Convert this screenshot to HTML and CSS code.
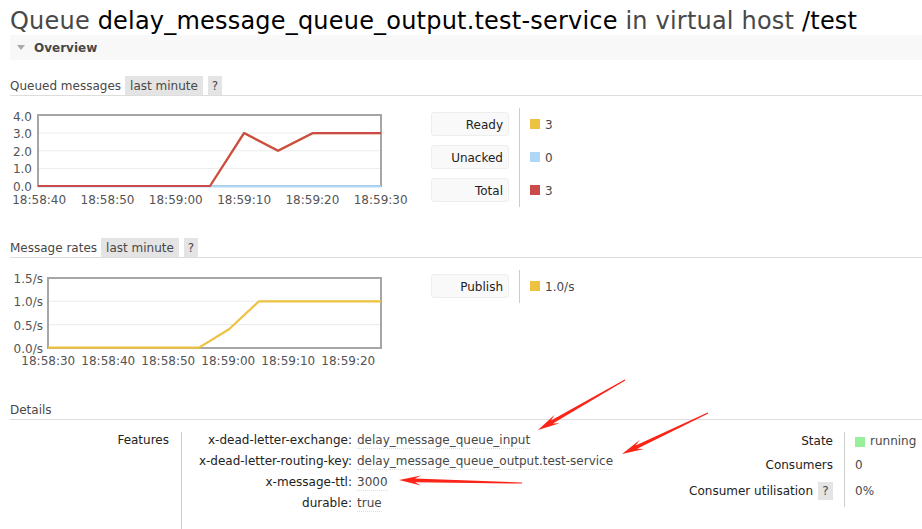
FILE: index.html
```html
<!DOCTYPE html>
<html>
<head>
<meta charset="utf-8">
<title>Queue delay_message_queue_output.test-service</title>
<link rel="stylesheet" href="styles.css">
</head>
<body>
<div class="page">
  <h1 class="title"><span>Queue</span> <span class="name">delay_message_queue_output.test-service</span> <span>in virtual host</span> <span class="name">/test</span></h1>
  <div class="section-bar"><span class="tri"></span>Overview</div>

  <div class="sub-head"><span>Queued messages</span><span class="badge">last minute</span><span class="badge q">?</span></div>
  <div class="chart-row">
    <svg class="chart" width="411" height="106" viewBox="10 104 411 106">
      <g class="grid">
        <line x1="39" y1="133.1" x2="380" y2="133.1"/>
        <line x1="39" y1="150.75" x2="380" y2="150.75"/>
        <line x1="39" y1="168.4" x2="380" y2="168.4"/>
      </g>
      <rect class="frame" x="38" y="115" width="343" height="71"/>
      <polyline class="s-yellow" points="38,186 210,186 244,133.1 278,150.75 313,133.1 381,133.1"/>
      <polyline class="s-blue" points="38,186.3 381,186.3"/>
      <polyline class="s-red" points="38,186 210,186 244,133.1 278,150.75 313,133.1 381,133.1"/>
      <g class="ylab">
        <text x="32" y="120.8">4.0</text>
        <text x="32" y="138.1">3.0</text>
        <text x="32" y="155.7">2.0</text>
        <text x="32" y="173.3">1.0</text>
        <text x="32" y="190.9">0.0</text>
      </g>
      <g class="xlab">
        <text x="39.2" y="204.3">18:58:40</text>
        <text x="107.5" y="204.3">18:58:50</text>
        <text x="175.8" y="204.3">18:59:00</text>
        <text x="244.1" y="204.3">18:59:10</text>
        <text x="312.4" y="204.3">18:59:20</text>
        <text x="380.7" y="204.3">18:59:30</text>
      </g>
    </svg>
    <div class="legend legend-1">
      <div class="lg-label"><span class="lg-box">Ready</span></div>
      <div class="lg-value"><span class="sq sq-yellow"></span>3</div>
      <div class="lg-label"><span class="lg-box">Unacked</span></div>
      <div class="lg-value"><span class="sq sq-blue"></span>0</div>
      <div class="lg-label"><span class="lg-box">Total</span></div>
      <div class="lg-value"><span class="sq sq-red"></span>3</div>
    </div>
  </div>

  <div class="sub-head sub-rates"><span>Message rates</span><span class="badge">last minute</span><span class="badge q">?</span></div>
  <div class="chart-row">
    <svg class="chart" width="411" height="112" viewBox="10 258 411 112">
      <g class="grid">
        <line x1="49" y1="301.3" x2="380" y2="301.3"/>
        <line x1="49" y1="324.7" x2="380" y2="324.7"/>
      </g>
      <rect class="frame" x="48" y="278" width="333" height="70"/>
      <polyline class="s-yellow" points="48,347.6 199,347.6 229,329.3 259,301.3 381,301.3"/>
      <g class="ylab">
        <text x="43" y="282.8">1.5/s</text>
        <text x="43" y="306.1">1.0/s</text>
        <text x="43" y="329.5">0.5/s</text>
        <text x="43" y="352.8">0.0/s</text>
      </g>
      <g class="xlab">
        <text x="48.3" y="364.8">18:58:30</text>
        <text x="108.3" y="364.8">18:58:40</text>
        <text x="168.3" y="364.8">18:58:50</text>
        <text x="228.3" y="364.8">18:59:00</text>
        <text x="288.3" y="364.8">18:59:10</text>
        <text x="348.3" y="364.8">18:59:20</text>
      </g>
    </svg>
    <div class="legend legend-2">
      <div class="lg-label"><span class="lg-box">Publish</span></div>
      <div class="lg-value"><span class="sq sq-yellow"></span>1.0/s</div>
    </div>
  </div>

  <div class="sub-head sub-details"><span>Details</span></div>
  <div class="details">
    <div class="dt-left">
      <div class="dl-label">Features</div>
      <div class="dl-value">
        <div class="args">
          <span class="arg-key">x-dead-letter-exchange:</span><span class="arg-val">delay_message_queue_input</span>
          <span class="arg-key">x-dead-letter-routing-key:</span><span class="arg-val">delay_message_queue_output.test-service</span>
          <span class="arg-key">x-message-ttl:</span><span class="arg-val">3000</span>
          <span class="arg-key">durable:</span><span class="arg-val">true</span>
        </div>
      </div>
      <div class="dl-label">Policy</div>
      <div class="dl-value"></div>
    </div>
    <div class="dt-right">
      <div class="dr-label">State</div>
      <div class="dr-value"><span class="sq sq-green"></span>running</div>
      <div class="dr-label">Consumers</div>
      <div class="dr-value">0</div>
      <div class="dr-label">Consumer utilisation<span class="help">?</span></div>
      <div class="dr-value">0%</div>
    </div>
  </div>
</div>

<svg class="annotations" width="922" height="529" viewBox="0 0 922 529">
  <polygon points="625.3,380.5 552.8,423.6 559.6,423.3 538,430 554.6,414.7 551.0,420.4 624.7,379.5"/>
  <polygon points="708.3,413.5 637.2,448.7 644.0,449.0 622,454 639.7,440.0 635.6,445.5 707.7,412.5"/>
  <polygon points="522,483.6 415,482.2 420.9,485.5 399,480 421.1,475.5 415,478.6 522,482.4"/>
</svg>
</body>
</html>
```
FILE: styles.css
```css
html, body {
  margin: 0;
  padding: 0;
  background: #fff;
}
body {
  font-family: "DejaVu Sans", Verdana, sans-serif;
  font-size: 12px;
  color: #484848;
  position: relative;
  width: 922px;
  height: 529px;
  overflow: hidden;
}
.page {
  padding-left: 10px;
}
.title {
  margin: 0;
  height: 35px;
  box-sizing: border-box;
  padding-top: 8px;
  font-size: 24px;
  line-height: 27px;
  font-weight: normal;
  letter-spacing: 0.2px;
  white-space: nowrap;
  color: #484848;
}
.title .name {
  color: #000;
}
.section-bar {
  height: 25px;
  background: #f8f8f8;
  display: flex;
  align-items: center;
  padding-left: 7px;
  font-weight: bold;
  color: #484848;
}
.tri {
  width: 0;
  height: 0;
  border-left: 4.5px solid transparent;
  border-right: 4.5px solid transparent;
  border-top: 5px solid #aaa;
  margin-right: 9px;
}
.sub-head {
  display: flex;
  height: 19px;
  line-height: 21px;
  border-bottom: 1px solid #ddd;
  margin-top: 16px;
  white-space: nowrap;
}
.sub-rates {
  margin-top: 28px;
}
.sub-details {
  margin-top: 30px;
}
.badge {
  background: #e4e4e4;
  padding: 0 5px;
  margin-left: 4px;
}
.badge.q {
  margin-left: 5px;
  padding: 0 4px;
}
.chart-row {
  display: flex;
  align-items: flex-start;
}
.legend-1 {
  margin-top: 4px;
}
.chart {
  display: block;
  flex: none;
}
.chart .grid line {
  stroke: #ebebeb;
  stroke-width: 1;
}
.chart .frame {
  fill: none;
  stroke: #a6a6a6;
  stroke-width: 2;
}
.chart polyline {
  fill: none;
  stroke-width: 2.2;
  stroke-linejoin: round;
}
.s-yellow { stroke: #edc240; }
.s-blue { stroke: #afd8f8; }
.s-red { stroke: #cb4b4b; }
.chart text {
  font-family: "DejaVu Sans", Verdana, sans-serif;
  font-size: 12px;
  fill: #545454;
}
.ylab text { text-anchor: end; }
.xlab text { text-anchor: middle; }

.sub-head + .chart-row {
  margin-top: 8px;
}
.sub-rates + .chart-row {
  margin-top: 0;
}
.legend {
  display: grid;
  grid-template-columns: auto auto;
  margin-left: 10px;
}
.legend-2 {
  margin-top: 12px;
}
.lg-label {
  padding: 4px 10px 5px 0;
  border-right: 1px solid #ccc;
}
.lg-box {
  display: block;
  width: 78px;
  height: 24px;
  box-sizing: border-box;
  border: 1px solid #eee;
  border-radius: 3px;
  background: #f9f9f9;
  text-align: right;
  padding-right: 5px;
  line-height: 24px;
  overflow: hidden;
  color: #222;
}
.lg-value {
  padding: 5px 0 4px 10px;
  display: flex;
  align-items: center;
  height: 24px;
  white-space: nowrap;
}
.sq {
  display: inline-block;
  width: 10px;
  height: 10px;
  margin-right: 5px;
  flex: none;
}
.lg-value .sq {
  margin-top: -2px;
}
.sq-yellow { background: #edc240; }
.sq-blue { background: #afd8f8; }
.sq-red { background: #cb4b4b; }
.sq-green { background: #98f098; }

.details {
  display: flex;
  margin-top: 12px;
  align-items: flex-start;
}
.dt-left {
  display: grid;
  grid-template-columns: 172px auto;
  line-height: 15px;
}
.dl-label {
  text-align: right;
  padding: 1px 12px 16px 0;
  border-right: 1px solid #ccc;
  color: #222;
}
.dl-value {
  padding: 1px 0 16px 0;
}
.args {
  display: grid;
  grid-template-columns: 175px auto;
  row-gap: 6px;
  white-space: nowrap;
}
.arg-key {
  text-align: right;
  padding-right: 5px;
  color: #222;
}
.arg-val {
  justify-self: start;
  border-bottom: 1px dotted #ddd;
  height: 15px;
  margin-bottom: -1px;
}
.dt-right {
  margin-left: auto;
  display: grid;
  grid-template-columns: auto 77px;
  line-height: 15px;
}
.dr-label {
  display: flex;
  align-items: center;
  justify-content: flex-end;
  padding: 2px 11px 7px 0;
  border-right: 1px solid #ccc;
  color: #222;
  white-space: nowrap;
}
.dr-value {
  display: flex;
  align-items: center;
  padding: 2px 0 7px 10px;
  white-space: nowrap;
}
.help {
  display: inline-block;
  width: 15px;
  height: 18px;
  line-height: 18px;
  text-align: center;
  background: #e4e4e4;
  margin-left: 5px;
  color: #484848;
}
.annotations {
  position: absolute;
  left: 0;
  top: 0;
  pointer-events: none;
}
.annotations polygon {
  fill: #fb2418;
}
```
